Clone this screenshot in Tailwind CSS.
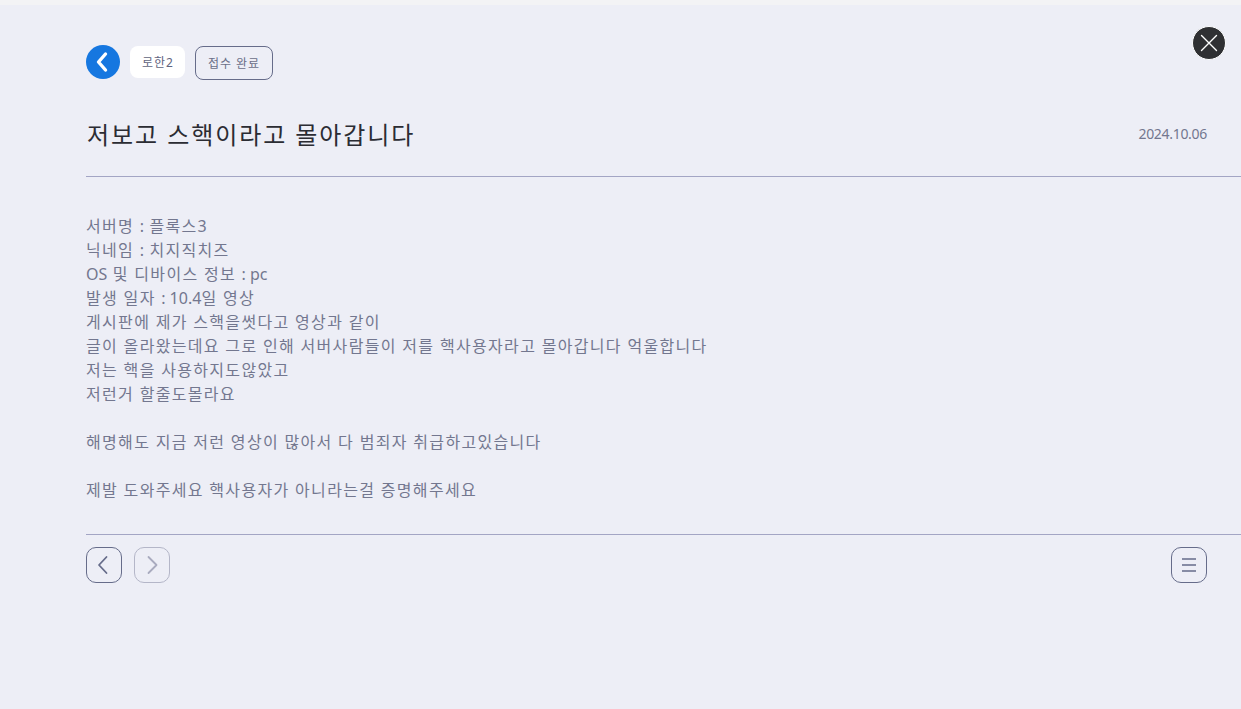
<!DOCTYPE html>
<html lang="ko">
<head>
  <meta charset="UTF-8" />
  <meta name="viewport" content="width=device-width, initial-scale=1.0" />
  <title>접수 내역</title>
  <script src="https://cdn.jsdelivr.net/npm/@tailwindcss/browser@4"></script>
</head>
<body class="bg-[#edeef6] font-['Noto_Sans','Noto_Sans_CJK_KR',sans-serif] overflow-hidden">
  <div class="h-[5px] bg-[#f3f3f5]"></div>

  <div class="relative h-[704px] pl-[86px]">
    <button class="absolute right-[15px] top-[21px] w-[34px] h-[34px] rounded-full bg-[#2f3033] border border-white flex items-center justify-center">
      <svg width="20" height="20" viewBox="0 0 20 20" fill="none" stroke="#fff" stroke-width="1.4" stroke-linecap="round"><path d="M2.500 2.500l15 15M17.500 2.500l-15 15" /></svg>
    </button>

    <div class="flex items-center pt-[40px] h-[74px] tracking-[0.06em]">
      <button class="w-[34px] h-[34px] rounded-full bg-[#1677e0] flex items-center justify-center">
        <svg width="14" height="22" viewBox="0 0 14 22" fill="none" stroke="#fff" stroke-width="3.4" stroke-linecap="round" stroke-linejoin="round"><path d="M9.500 3L2.500 11l7 8" /></svg>
      </button>
      <span class="ml-[10px] w-[55px] h-[32px] pt-px rounded-lg bg-white flex items-center justify-center text-xs text-[#5f6480]">로한<span class="tracking-normal">2</span></span>
      <span class="ml-[10px] self-start mt-px w-[78px] h-[34px] pt-px rounded-lg border border-[#666c8a] flex items-center justify-center text-xs text-[#6b6f88]">접수 완료</span>
    </div>

    <div class="flex items-center justify-between pr-[34px] mt-[31px] h-[50px]">
      <h1 class="ml-px text-2xl text-[#2b2c33] tracking-[0.08em]">저보고 스핵이라고 몰아갑니다</h1>
      <span class="text-sm tracking-[-0.3px] text-[#73778f] mb-[2px]">2024.10.06</span>
    </div>

    <div class="mt-[16px] border-t border-[#a3a5c4]"></div>

    <div class="pt-[37px] pb-[32px] text-base leading-6 text-[#73778f] tracking-[0.083em]">
      <p>서버명 <span class="tracking-normal">:</span> 플록스<span class="tracking-normal">3</span></p>
      <p>닉네임 <span class="tracking-normal">:</span> 치지직치즈</p>
      <p><span class="tracking-normal">OS</span> 및 디바이스 정보 <span class="tracking-normal">: pc</span></p>
      <p>발생 일자 <span class="tracking-normal">: 10.4</span>일 영상</p>
      <p>게시판에 제가 스핵을썻다고 영상과 같이</p>
      <p>글이 올라왔는데요 그로 인해 서버사람들이 저를 핵사용자라고 몰아갑니다 억울합니다</p>
      <p>저는 핵을 사용하지도않았고</p>
      <p>저런거 할줄도몰라요</p>
      <p class="h-6"></p>
      <p>해명해도 지금 저런 영상이 많아서 다 범죄자 취급하고있습니다</p>
      <p class="h-6"></p>
      <p>제발 도와주세요 핵사용자가 아니라는걸 증명해주세요</p>
    </div>

    <div class="border-t border-[#a3a5c4]"></div>

    <div class="flex items-center justify-between pr-[34px] mt-[12px]">
      <div class="flex gap-3">
        <button class="w-9 h-9 rounded-[10px] border border-[#666c8a] flex items-center justify-center">
          <svg width="14" height="22" viewBox="0 0 14 22" fill="none" stroke="#666c8a" stroke-width="1.8" stroke-linecap="round" stroke-linejoin="round"><path d="M9.500 3L2 11l7.500 8" /></svg>
        </button>
        <button class="w-9 h-9 rounded-[10px] border border-[#b4b6c8] flex items-center justify-center">
          <svg width="14" height="22" viewBox="0 0 14 22" fill="none" stroke="#a9abbf" stroke-width="1.8" stroke-linecap="round" stroke-linejoin="round"><path d="M3.500 3l8 8-8 8" /></svg>
        </button>
      </div>
      <button class="w-9 h-9 rounded-[10px] border border-[#666c8a] flex items-center justify-center">
        <svg width="14" height="14" viewBox="0 0 14 14" fill="none" stroke="#666c8a" stroke-width="1.6"><path d="M0 1h14M0 7h14M0 13h14" /></svg>
      </button>
    </div>
  </div>
</body>
</html>
